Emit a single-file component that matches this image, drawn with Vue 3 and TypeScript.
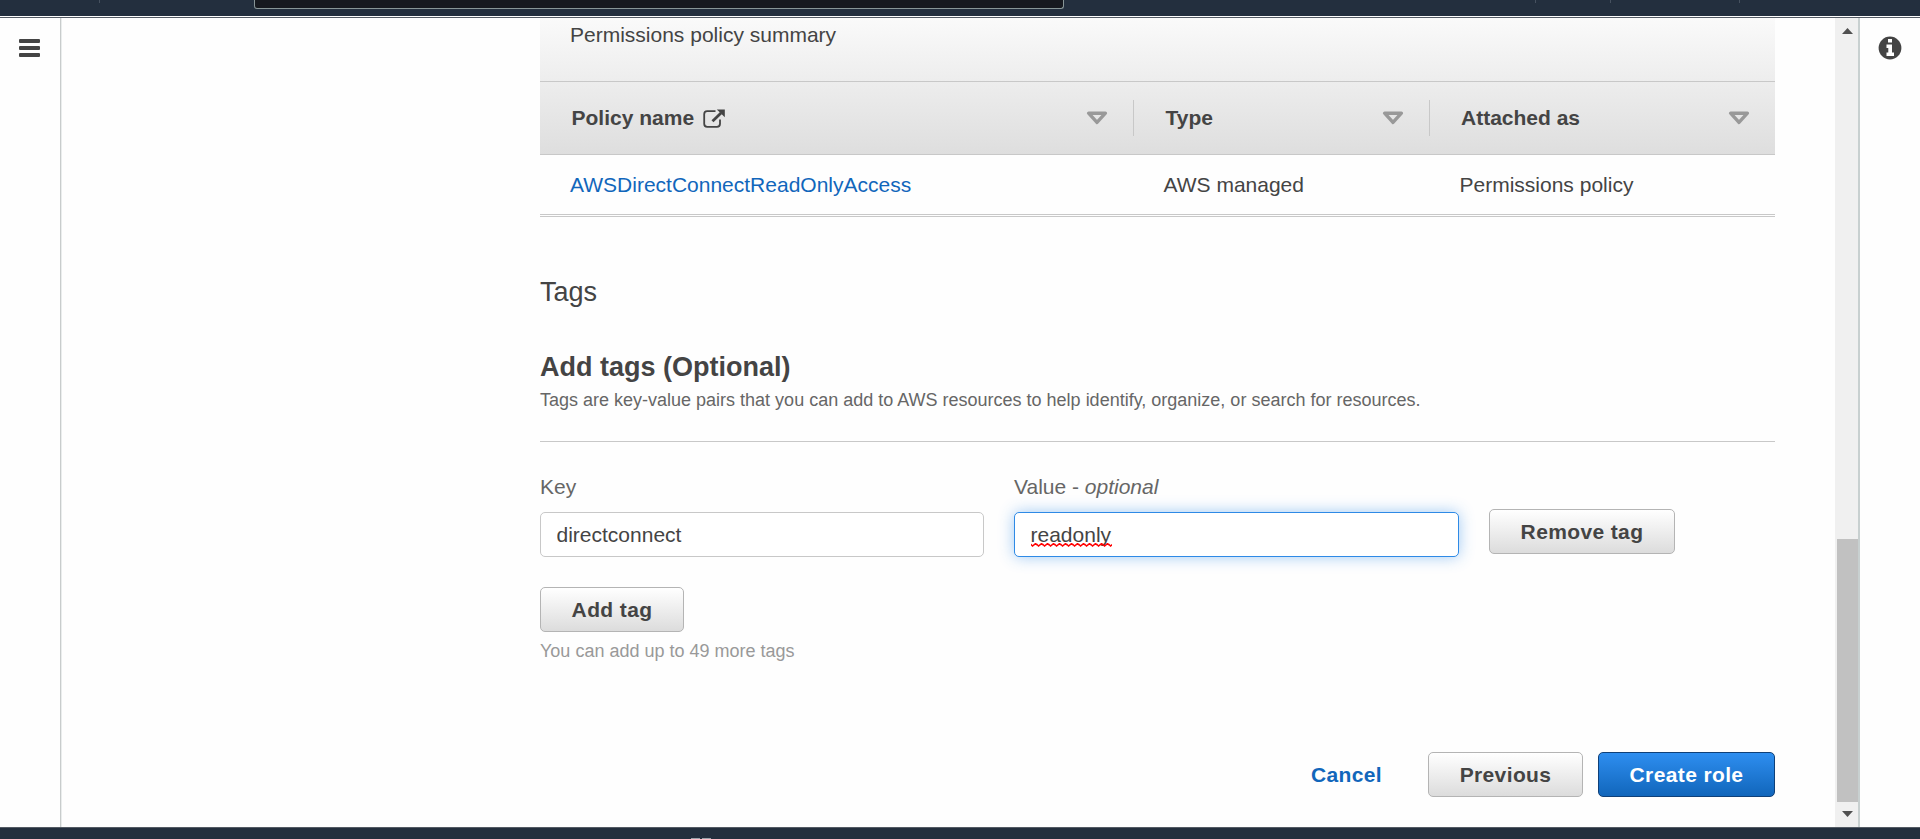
<script setup lang="ts">
import { ref } from 'vue'

interface Column {
  label: string
  external?: boolean
}

const columns: Column[] = [
  { label: 'Policy name', external: true },
  { label: 'Type' },
  { label: 'Attached as' },
]

const policies = [
  { name: 'AWSDirectConnectReadOnlyAccess', type: 'AWS managed', attachedAs: 'Permissions policy' },
]

const tagKey = ref('directconnect')
const tagValue = ref('readonly')
</script>

<template>
  <div class="page">
    <header class="topbar">
      <i class="tick tick-services"></i>
      <div class="search"></div>
      <i class="tick tick-a"></i>
      <i class="tick tick-b"></i>
      <i class="tick tick-c"></i>
    </header>

    <div class="body">
      <aside class="rail rail-left">
        <svg class="menu" width="21" height="18" viewBox="0 0 21 18">
          <rect width="21" height="4" rx="1" />
          <rect y="7" width="21" height="4" rx="1" />
          <rect y="14" width="21" height="4" rx="1" />
        </svg>
      </aside>

      <main class="content">
        <section class="policy-panel">
          <div class="panel-top">
            <div class="panel-title">Permissions policy summary</div>
            <div class="grid head">
              <div v-for="col in columns" :key="col.label" class="th">
                <span class="th-label">{{ col.label }}</span>
                <svg v-if="col.external" class="ext" width="22" height="19" viewBox="0 0 22 19">
                  <path
                    d="M12.5 2.2H4.2Q1.2 2.2 1.2 5.2V14.8Q1.2 17.8 4.2 17.8H14Q17 17.8 17 14.8V10.5"
                    fill="none" stroke="#444" stroke-width="1.8"
                  />
                  <path d="M9.5 12.2L18 4" fill="none" stroke="#444" stroke-width="2.8" />
                  <path d="M13.8 0.5H21.8V8.2Z" fill="#444" />
                </svg>
                <svg class="sort" width="22" height="14" viewBox="0 0 22 14">
                  <path
                    d="M2.6 2.2H19.4L11 11.4Z" fill="none" stroke="#999" stroke-width="3.4"
                    stroke-linejoin="round"
                  />
                </svg>
              </div>
            </div>
          </div>
          <div v-for="p in policies" :key="p.name" class="grid row">
            <a class="link">{{ p.name }}</a>
            <span>{{ p.type }}</span>
            <span>{{ p.attachedAs }}</span>
          </div>
        </section>

        <h2 class="tags-title">Tags</h2>
        <h3 class="add-title">Add tags (Optional)</h3>
        <p class="desc">
          Tags are key-value pairs that you can add to AWS resources to help identify, organize, or search for resources.
        </p>

        <div class="tag-row">
          <label class="field">
            <span class="label">Key</span>
            <input v-model="tagKey" class="input" type="text" spellcheck="false" />
          </label>
          <label class="field value-field">
            <span class="label">Value - <em>optional</em></span>
            <span class="input focused"><span class="misspelt">{{ tagValue }}<svg
              class="squiggle" width="81" height="4" viewBox="0 0 81 4"
            ><defs><pattern id="wave" width="6" height="4" patternUnits="userSpaceOnUse"><path
              d="M-1.5 0L1.5 3L4.5 0.6L7.5 3" fill="none" stroke="#f00" stroke-width="1.5"
            /></pattern></defs><rect width="81" height="4" fill="url(#wave)" /></svg></span></span>
          </label>
          <button class="btn remove">Remove tag</button>
        </div>

        <button class="btn add">Add tag</button>
        <p class="hint">You can add up to 49 more tags</p>

        <div class="actions">
          <a class="cancel">Cancel</a>
          <button class="btn previous">Previous</button>
          <button class="btn primary">Create role</button>
        </div>
      </main>

      <div class="scrollbar">
        <svg class="arrow" width="11" height="6" viewBox="0 0 11 6"><path d="M0 6L5.5 0L11 6Z" /></svg>
        <div class="thumb"></div>
        <svg class="arrow" width="11" height="6" viewBox="0 0 11 6"><path d="M0 0L5.5 6L11 0Z" /></svg>
      </div>

      <aside class="rail rail-right">
        <svg width="24" height="24" viewBox="0 0 24 24">
          <circle cx="12" cy="12" r="11.4" fill="#444" />
          <path d="M10 3H14V6.5H10ZM8.5 8.5H14V16.5H16V20H8.5V16.5H10.3V12H8.5Z" fill="#fff" />
        </svg>
      </aside>
    </div>

    <footer class="footer">
      <i></i><i></i>
    </footer>
  </div>
</template>

<style>
body {
  margin: 0;
  overflow: hidden;
}
</style>

<style scoped>
.page {
  width: 1920px;
  height: 839px;
  overflow: hidden;
  display: flex;
  flex-direction: column;
  background: #fefefe;
  color: #444;
  font: 21px/30px "Liberation Sans", Arial, sans-serif;
}
.topbar {
  height: 16px;
  flex: none;
  display: flex;
  align-items: flex-start;
  background: #232f3e;
}
.tick { width: 1px; height: 3px; background: #46515f; }
.tick-services { margin-left: 99px; }
.search {
  box-sizing: border-box;
  width: 810px;
  height: 9px;
  margin-left: 154px;
  background: #16191f;
  border: 1px solid #879596;
  border-top: 0;
  border-radius: 0 0 3px 3px;
}
.tick-a { margin-left: 471px; }
.tick-b { margin-left: 74px; }
.tick-c { margin-left: 128px; }

.body {
  height: 809px;
  flex: none;
  display: flex;
  border-top: 1px solid #545b64;
  margin-top: 1px;
  overflow: hidden;
}
.rail { box-sizing: border-box; flex: none; }
.rail-left {
  width: 62px;
  border-right: 1px solid #eaeded;
  padding: 21px 0 0 19px;
  box-shadow: inset -1px 0 #c8cccc;
}
.rail-right { width: 62px; border-left: 2px solid #c8d0d0; padding: 18px 0 0 18px; }
.rail svg { display: block; fill: #444; }

.content {
  width: 1235px;
  flex: none;
  margin: 0 60px 0 478px;
}
.panel-top {
  height: 136px;
  background: linear-gradient(#fafafa, #dedede);
  border-bottom: 1px solid #c8c8c8;
}
.panel-title {
  box-sizing: border-box;
  height: 64px;
  padding: 2px 30px 0;
  border-bottom: 1px solid #c8c8c8;
}
.grid {
  display: grid;
  grid-template-columns: 594px 296px 345px;
}
.head { padding-top: 18px; font-weight: bold; }
.th {
  box-sizing: border-box;
  height: 36px;
  display: flex;
  align-items: center;
  padding: 0 25px 0 31.5px;
  border-right: 1px solid #c8c8c8;
}
.th:last-child { border-right: 0; padding-left: 31px; }
.ext { margin-left: 8.5px; }
.sort { margin-left: auto; }
.row {
  height: 59px;
  align-items: center;
  border-bottom: 3px double #c8c8c8;
}
.row > * { padding-left: 29.5px; }
.row > .link { padding-left: 30px; }
.link { color: #1166bb; }

h2, h3, p { margin: 0; }
.tags-title { margin-top: 57px; font-size: 27px; line-height: 36px; font-weight: normal; }
.add-title { margin-top: 39px; font-size: 27px; line-height: 36px; }
.desc {
  box-sizing: border-box;
  height: 57px;
  padding-top: 2px;
  font-size: 18px;
  line-height: 27px;
  color: #666;
  border-bottom: 1px solid #c8c8c8;
}
.tag-row { display: flex; gap: 30px; margin-top: 30px; }
.field { width: 444px; display: flex; flex-direction: column; color: #666; }
.value-field { width: 445px; }
.label { height: 40px; line-height: 30px; }
.input {
  box-sizing: border-box;
  width: 100%;
  height: 45px;
  padding: 0 15.5px;
  border: 1px solid #c8c8c8;
  border-radius: 5px;
  background: #fff;
  color: #444;
  font: 21px/43px "Liberation Sans", Arial, sans-serif;
}
.focused { border-color: #2e8ae6; box-shadow: 0 0 15px rgba(46, 138, 230, 0.45); }
.misspelt { position: relative; }
.squiggle { position: absolute; left: 0; top: 20px; }
.btn {
  box-sizing: border-box;
  height: 45px;
  padding: 0;
  border: 1px solid #b4b4b4;
  border-radius: 5px;
  background: linear-gradient(#fff, #dcdcdc);
  color: #444;
  font: bold 21px/30px "Liberation Sans", Arial, sans-serif;
  letter-spacing: 0.375px;
}
.remove { width: 186px; margin-top: 37px; }
.add { display: block; width: 144px; margin-top: 30px; }
.hint { margin-top: 6px; font-size: 18px; line-height: 27px; color: #999; }
.actions {
  display: flex;
  justify-content: flex-end;
  align-items: center;
  margin-top: 87px;
}
.cancel { margin-right: 46px; color: #1166bb; font-weight: bold; letter-spacing: 0.375px; }
.previous { width: 155px; margin-right: 15px; }
.primary {
  width: 177px;
  border-color: #0f4078;
  background: linear-gradient(#2e8ef0, #1166bb);
  color: #fff;
}

.scrollbar {
  box-sizing: border-box;
  width: 23px;
  flex: none;
  background: #f0f0f0;
  padding: 10px 1px 10px 2px;
  display: flex;
  flex-direction: column;
  align-items: center;
}
.arrow { display: block; flex: none; fill: #505050; }
.thumb { width: 21px; height: 263px; margin: auto 0 9px; background: #c1c1c1; }

.footer {
  flex: 1;
  display: flex;
  align-items: flex-end;
  gap: 2px;
  padding-left: 691px;
  background: #232f3e;
  border-top: 1px solid #545b64;
}
.footer i { width: 9px; height: 1px; background: #9aa1aa; }
</style>
